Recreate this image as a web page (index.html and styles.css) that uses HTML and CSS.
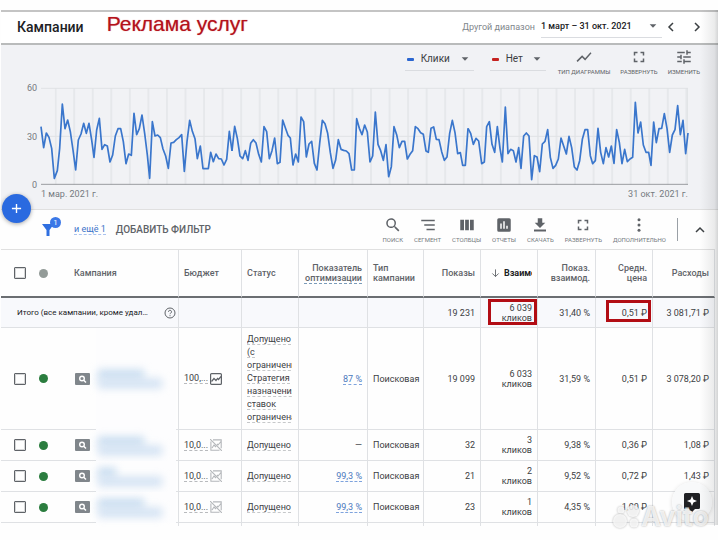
FILE: index.html
```html
<!DOCTYPE html>
<html lang="ru">
<head>
<meta charset="utf-8">
<title>Кампании</title>
<meta name="viewport" content="width=device-width, initial-scale=1">
<link rel="stylesheet" href="styles.css">
</head>
<body>
<svg class="defs" aria-hidden="true">
  <symbol id="caret" viewBox="0 0 24 24"><path d="M4 8h16l-8 8z"/></symbol>
  <symbol id="full" viewBox="0 0 24 24"><path d="M7 14H5v5h5v-2H7zM5 10h2V7h3V5H5zM17 17h-3v2h5v-5h-2zM14 5v2h3v3h2V5z"/></symbol>
  <symbol id="search-type" viewBox="0 0 15 12"><rect width="15" height="12" rx="1" fill="#80868b"/><circle cx="7" cy="5.500" r="2.300" fill="none" stroke="#fff" stroke-width="1.400"/><path d="M8.700 7.200l2.300 2.300" stroke="#fff" stroke-width="1.500"/></symbol>
  <symbol id="budget-on" viewBox="0 0 12 12"><rect x=".6" y=".6" width="10.800" height="10.800" rx="1" fill="none" stroke="#5f6368" stroke-width="1.200"/><path d="M1.500 8.500l2.500-3 2 2 1.500-2 1 1 2.500-3" fill="none" stroke="#5f6368" stroke-width="1.200"/></symbol>
  <symbol id="budget-off" viewBox="0 0 12 12"><path d="M3 .9h8.200v8.300M.9 2.500v8.700h8.600M0 0l12 12M2 9l2-3 2 2M7 5l1 1 3-3.500" fill="none" stroke="#b4b7ba" stroke-width="1.100"/></symbol>
</svg>
<div class="page">
  <header class="topbar">
    <h1>Кампании</h1>
    <strong class="note">Реклама услуг</strong>
    <div class="range">
      <label for="range">Другой диапазон</label>
      <span class="pick pick-date">
        <select id="range"><option>1 март – 31 окт. 2021</option></select>
        <svg><use href="#caret"/></svg>
      </span>
      <div class="steps">
        <button class="step" aria-label="Назад"><svg viewBox="0 0 12 12"><path d="M8 2L4 6l4 4"/></svg></button>
        <button class="step" aria-label="Вперёд"><svg viewBox="0 0 12 12"><path d="M4 2l4 4-4 4"/></svg></button>
      </div>
    </div>
  </header>

  <section class="chart">
    <div class="chart-bar">
      <span class="pick pick-clicks"><i class="key blue"></i>
        <select aria-label="Первый показатель"><option>Клики</option></select>
        <svg><use href="#caret"/></svg></span>
      <span class="pick pick-none"><i class="key red"></i>
        <select aria-label="Второй показатель"><option>Нет</option></select>
        <svg><use href="#caret"/></svg></span>
      <div class="tools">
        <button class="tool"><svg viewBox="0 0 24 24"><path d="M3.500 18.500l6-6 4 4L22 6.900 20.600 5.500l-7.100 8-4-4L2 17z"/></svg>Тип диаграммы</button>
        <button class="tool"><svg><use href="#full"/></svg>Развернуть</button>
        <button class="tool"><svg viewBox="0 0 24 24"><path d="M3 17v2h6v-2zM3 5v2h10V5zM13 21v-2h8v-2h-8v-2h-2v6zM7 9v2H3v2h4v2h2V9zM21 13v-2H11v2zM15 9h2V7h4V5h-4V3h-2z"/></svg>Изменить</button>
      </div>
    </div>
    <div class="plot">
      <div class="y-axis"><span>60</span><span>30</span><span>0</span></div>
      <svg class="lines" viewBox="123 24 1941 291" preserveAspectRatio="none" role="img" aria-label="Клики по дням">
        <defs><pattern id="weeks" x="164" y="0" width="55.650" height="400" patternUnits="userSpaceOnUse"><rect width="6" height="400" fill="#e6e8eb"/></pattern></defs>
        <rect x="164" y="24" width="1900" height="291" fill="url(#weeks)"/>
        <path class="grid" d="M123 25H2064M123 169H2064M2062 24V315"/>
        <path class="base" d="M123 313H2064"/>
        <g class="series">
          <polyline points="123,140 131,203 139,159 147,172 155,205 163,295 172,272 179,205 187,72 195,146 203,120 211,155 219,210 227,270 235,180 243,162 251,130 259,160 267,130 275,180 282,232 290,150 298,115 306,208 314,194 322,198 330,246 338,225 346,168 354,146 362,146 370,185 378,251 386,222 394,226 402,100 410,164 418,146 426,105 434,160 442,225 449,295 457,125 465,168 473,165 481,173 489,207 497,228 505,265 513,189 521,187 529,179 537,173 545,164 553,274 561,185 569,121 577,154 585,176 592,236 601,198 609,266 617,266 625,266 632,217 640,245 648,222 656,236 664,237 672,255 680,238 688,154 696,213"/>
          <polyline transform="translate(690 0)" points="6,213 14,139 22,175 30,228 38,236 46,212 54,241 62,190 70,179 78,189 86,223 94,246 102,140 110,155 118,236 126,212 134,174 142,251 150,247 158,120 166,143 174,166 181,174 189,255 197,222 205,246 213,111 221,125 229,231 237,192 245,184 253,250 261,270 269,190 277,121 285,131 293,160 301,218 309,265 317,240 325,179 333,208 341,211 349,213 357,221 365,270 373,270 380,116 388,145 396,164 404,135 412,156 420,246 428,228 436,96 444,193 452,212 460,241 468,194 476,290 484,260 492,140 500,164 508,203 516,184 524,184 532,237 540,223 548,212 556,140 564,146 572,158 580,163 588,213 595,217 603,145 611,141 619,178 627,179 635,215 643,241 651,231 659,160 667,121 675,158 683,221 691,218 698,256 706,256 714,145"/>
          <polyline transform="translate(1380 0)" points="24,145 32,160 40,193 48,175 56,183 65,251 73,246 80,140 88,125 96,193 104,217 112,140 120,205 127,246 136,81 144,221 152,208 160,212 168,246 176,203 183,265 191,168 199,159 207,168 215,299 223,227 231,231 239,275 247,192 255,184 263,149 271,232 279,265 287,256 295,237 303,174 311,198 319,222 327,169 335,203 343,261 351,270 359,242 367,178 375,149 383,149 391,227 398,251 406,242 414,145 422,217 430,251 438,203 446,231 454,198 462,250 470,149 478,187 486,251 494,208 502,245 510,237 518,232 526,67 534,159 542,126 550,195 558,217 566,217 573,256 581,126 589,188 597,146 605,145 613,101 621,145 629,217 637,165 645,149 653,77 661,164 669,121 677,221 684,159"/>
        </g>
      </svg>
      <div class="x-axis"><span>1 мар. 2021 г.</span><span>31 окт. 2021 г.</span></div>
    </div>
  </section>

  <section class="filters">
    <button class="add" aria-label="Создать"><svg viewBox="0 0 12 12"><path d="M6 1v10M1 6h10"/></svg></button>
    <button class="funnel" aria-label="Фильтр"><svg viewBox="0 0 12 12"><path d="M0 0h12L7.500 6v6h-3V6z"/></svg><span class="badge">1</span></button>
    <a class="more" href="#">и ещё 1</a>
    <button class="add-filter">Добавить фильтр</button>
    <div class="tools">
      <button class="tool"><svg viewBox="0 0 24 24"><path d="M15.500 14h-.8l-.3-.3A6.500 6.500 0 1 0 13.700 14.400l.3.300v.8l5 5 1.500-1.500zm-6 0a4.500 4.500 0 1 1 0-9 4.500 4.500 0 0 1 0 9z"/></svg>Поиск</button>
      <button class="tool"><svg viewBox="0 0 24 24"><path d="M3 5h18v2H3zM7 11h14v2H7zM10 17h11v2H10z"/></svg>Сегмент</button>
      <button class="tool"><svg viewBox="0 0 24 24"><path d="M3 5h5v14H3zM9.500 5h5v14h-5zM16 5h5v14h-5z"/></svg>Столбцы</button>
      <button class="tool"><svg viewBox="0 0 24 24"><path fill-rule="evenodd" d="M5 3h14a2 2 0 0 1 2 2v14a2 2 0 0 1-2 2H5a2 2 0 0 1-2-2V5a2 2 0 0 1 2-2zm2 7v7h2v-7zm4-3v10h2V7zm4 6v4h2v-4z"/></svg>Отчеты</button>
      <button class="tool"><svg viewBox="0 0 24 24"><path d="M19 9h-4V3H9v6H5l7 7zM4 18v2.500h16V18z"/></svg>Скачать</button>
      <button class="tool"><svg><use href="#full"/></svg>Развернуть</button>
      <button class="tool"><svg viewBox="0 0 24 24"><circle cx="12" cy="5" r="2"/><circle cx="12" cy="12" r="2"/><circle cx="12" cy="19" r="2"/></svg>Дополнительно</button>
    </div>
    <button class="collapse" aria-label="Свернуть"><svg viewBox="0 0 12 12"><path d="M2 8l4-4 4 4"/></svg></button>
  </section>

  <table>
    <colgroup><col class="c-check"><col class="c-dot"><col class="c-name"><col class="c-budget"><col class="c-status"><col class="c-score"><col class="c-type"><col class="c-num"><col class="c-num"><col class="c-rate"><col class="c-num"><col class="c-cost"></colgroup>
    <thead>
      <tr>
        <th class="bare"><input type="checkbox" aria-label="Выбрать все"></th>
        <th class="bare dot-cell"><i class="dot grey"></i></th>
        <th class="name">Кампания</th>
        <th>Бюджет</th>
        <th>Статус</th>
        <th class="num"><span class="hint">Показатель оптимизации</span></th>
        <th>Тип кампании</th>
        <th class="num">Показы</th>
        <th class="sorted"><div class="sort"><svg viewBox="0 0 10 10"><path d="M5 1v8M1.500 5.500L5 9l3.500-3.500"/></svg><span>Взаимо</span></div></th>
        <th class="num">Показ. взаимод.</th>
        <th class="num">Средн. цена</th>
        <th class="num">Расходы</th>
      </tr>
    </thead>
    <tbody>
      <tr class="total">
        <td colspan="3"><div class="sum"><span>Итого (все кампании, кроме удал…</span><svg viewBox="0 0 12 12"><circle cx="6" cy="6" r="5"/><path d="M4.500 4.800a1.500 1.500 0 1 1 2.200 1.300q-.7.400-.7 1.100M6 8.200v1"/></svg></div></td>
        <td></td><td></td><td></td><td></td>
        <td class="num">19 231</td>
        <td class="num marked">6 039 кликов<i class="frame frame-clicks"></i></td>
        <td class="num">31,40 %</td>
        <td class="num marked">0,51 ₽<i class="frame frame-price"></i></td>
        <td class="num">3 081,71 ₽</td>
      </tr>
      <tr class="tall">
        <td class="bare"><input type="checkbox" aria-label="Выбрать кампанию"></td>
        <td class="bare dot-cell"><i class="dot"></i></td>
        <td class="name"><svg class="kind"><use href="#search-type"/></svg><div class="veil"><i></i><i></i></div></td>
        <td><div class="budget"><span>100,...</span><svg><use href="#budget-on"/></svg></div></td>
        <td class="status"><div class="lines-text"><span>Допущено<br>(с<br>ограничени<br>Стратегия<br>назначения<br>ставок<br>ограничена</span></div></td>
        <td class="num"><a href="#">87 %</a></td>
        <td>Поисковая</td>
        <td class="num">19 099</td><td class="num">6 033 кликов</td><td class="num">31,59 %</td><td class="num">0,51 ₽</td><td class="num">3 078,20 ₽</td>
      </tr>
      <tr>
        <td class="bare"><input type="checkbox" aria-label="Выбрать кампанию"></td>
        <td class="bare dot-cell"><i class="dot"></i></td>
        <td class="name"><svg class="kind"><use href="#search-type"/></svg><div class="veil"><i></i><i></i></div></td>
        <td><div class="budget"><span>10,0...</span><svg><use href="#budget-off"/></svg></div></td>
        <td class="status"><div class="lines-text"><span>Допущено</span></div></td>
        <td class="num">—</td>
        <td>Поисковая</td>
        <td class="num">32</td><td class="num">3<br>кликов</td><td class="num">9,38 %</td><td class="num">0,36 ₽</td><td class="num">1,08 ₽</td>
      </tr>
      <tr>
        <td class="bare"><input type="checkbox" aria-label="Выбрать кампанию"></td>
        <td class="bare dot-cell"><i class="dot"></i></td>
        <td class="name"><svg class="kind"><use href="#search-type"/></svg><div class="veil short"><i></i><i></i></div></td>
        <td><div class="budget"><span>10,0...</span><svg><use href="#budget-off"/></svg></div></td>
        <td class="status"><div class="lines-text"><span>Допущено</span></div></td>
        <td class="num"><a href="#">99,3 %</a></td>
        <td>Поисковая</td>
        <td class="num">21</td><td class="num">2<br>кликов</td><td class="num">9,52 %</td><td class="num">0,72 ₽</td><td class="num">1,43 ₽</td>
      </tr>
      <tr>
        <td class="bare"><input type="checkbox" aria-label="Выбрать кампанию"></td>
        <td class="bare dot-cell"><i class="dot"></i></td>
        <td class="name"><svg class="kind"><use href="#search-type"/></svg><div class="veil"><i></i><i></i></div></td>
        <td><div class="budget"><span>10,0...</span><svg><use href="#budget-off"/></svg></div></td>
        <td class="status"><div class="lines-text"><span>Допущено</span></div></td>
        <td class="num"><a href="#">99,3 %</a></td>
        <td>Поисковая</td>
        <td class="num">23</td><td class="num">1<br>кликов</td><td class="num">4,35 %</td><td class="num">1,00 ₽</td><td class="num"></td>
      </tr>
      <tr class="tail"><td colspan="3"></td><td></td><td></td><td></td><td></td><td></td><td></td><td></td><td></td><td></td></tr>
    </tbody>
  </table>

  <button class="assist" aria-label="Помощник"><svg viewBox="0 0 16 19"><path d="M1.500 0h13A1.500 1.500 0 0 1 16 1.500v13a1.500 1.500 0 0 1-1.500 1.500H11l-3 3-3-3H1.500A1.500 1.500 0 0 1 0 14.500v-13A1.500 1.500 0 0 1 1.500 0z" fill="#202124"/><path d="M8 3l1.400 3.600L13 8 9.400 9.400 8 13 6.600 9.400 3 8l3.600-1.400z" fill="#fff"/></svg></button>
  <div class="watermark">
    <svg viewBox="0 0 30 26"><circle cx="9" cy="17" r="7"/><circle cx="23" cy="19" r="4.500"/><circle cx="10" cy="6" r="3.500"/><circle cx="22" cy="7" r="6"/></svg>
    <span>Avito</span>
  </div>
</div>
</body>
</html>
```
FILE: styles.css
```css
* { box-sizing: border-box; }
body {
  margin: 0;
  background: #fefefe;
  color: #3c4043;
  font: 9px/10px Roboto, "Liberation Sans", sans-serif;
}
.defs { position: absolute; width: 0; height: 0; }
button, select {
  margin: 0;
  padding: 0;
  border: 0;
  background: none;
  color: inherit;
  font: inherit;
  appearance: none;
}
svg { display: block; fill: #5f6368; }
.page {
  position: relative;
  min-height: 100vh;
  padding: 10px 3px 0 1px;
}
.page::after {
  content: "";
  position: absolute;
  top: 10px;
  right: 0;
  width: 18px;
  height: 515px;
  background: linear-gradient(to right, rgba(60, 64, 67, 0), rgba(60, 64, 67, 0.1) 80%, rgba(60, 64, 67, 0.22));
  pointer-events: none;
}

/* Top bar */
.topbar {
  display: flex;
  align-items: center;
  height: 35px;
  margin-right: -3px;
  padding: 0 13px 2px 16px;
  border-top: 2px solid #c4c4c4;
  border-bottom: 2px solid #b9bbbb;
  background: #fff;
}
h1 { margin: 0; color: #202124; font-size: 14px; font-weight: 500; line-height: 20px; }
.note {
  margin: 0 auto 6px 23px;
  color: #b5121b;
  font: 21px/24px "Liberation Sans", Arial, sans-serif;
  text-shadow: 0 0 1px rgba(181, 18, 27, 0.6);
}
.range { display: flex; align-items: center; color: #80868b; }
.range label { margin-right: 6px; font-size: 9px; }
.pick {
  display: flex;
  align-items: center;
  height: 23px;
  border-bottom: 1px solid #dadce0;
}
.pick select { flex: 1; min-width: 0; }
.pick svg { width: 10px; height: 10px; }
.pick-date { width: 121px; color: #202124; font-weight: 500; padding-right: 4px; }
.steps { display: flex; gap: 9px; }
.step { width: 17px; height: 18px; }
.step svg { width: 12px; height: 12px; margin: auto; }
.step svg path, .collapse path { fill: none; stroke: #3c4043; stroke-width: 1.500; }

/* Chart */
.chart {
  height: 165px;
  margin-right: -3px;
  border-bottom: 1px solid #e0e0e0;
  background: #f1f2f5;
}
.chart-bar {
  display: flex;
  align-items: flex-start;
  justify-content: flex-end;
  height: 43px;
  padding: 3px 18px 0 0;
  font-size: 10px;
}
.key { width: 7px; height: 3px; margin: 0 7px 0 2px; border-radius: 1px; }
.key.blue { background: #2b66d0; }
.key.red { background: #c5221f; }
.pick-clicks { width: 69px; margin-right: 16px; padding-right: 4px; }
.pick-none { width: 56px; margin-right: 12px; padding-right: 4px; }
.tools { display: flex; gap: 10px; }
.tool {
  display: flex;
  flex-direction: column;
  align-items: center;
  gap: 2px;
  color: #5f6368;
  font-size: 6px;
  line-height: 8px;
  text-transform: uppercase;
  white-space: nowrap;
}
.tool svg { width: 18px; height: 18px; }
.plot {
  display: grid;
  grid-template-columns: 36px 1fr;
  column-gap: 4px;
  padding-right: 30px;
  color: #757a7f;
}
.y-axis {
  display: flex;
  flex-direction: column;
  justify-content: space-between;
  margin: -5px 0;
  text-align: right;
}
.lines { width: 100%; height: 97px; overflow: visible; fill: none; }
.lines path, .lines polyline { fill: none; vector-effect: non-scaling-stroke; }
.grid { stroke: #e0e2e5; }
.base { stroke: #9a9da0; }
.series { stroke: #3a76cc; stroke-width: 1.700; stroke-linejoin: round; }
.x-axis { grid-column: 2; display: flex; justify-content: space-between; padding-top: 4px; }

/* Filter bar */
.filters {
  position: relative;
  display: flex;
  align-items: center;
  height: 40px;
  padding: 0 9px 0 41px;
  border-bottom: 1px solid #e0e0e0;
}
.filters .tools { gap: 11px; }
.add {
  position: absolute;
  left: 1px;
  top: -16px;
  width: 29px;
  height: 29px;
  border-radius: 50%;
  background: #2a6ae0;
  box-shadow: 0 1px 4px rgba(0, 0, 0, 0.35);
}
.add svg { width: 11px; height: 11px; margin: auto; }
.add path { stroke: #fff; stroke-width: 1.500; }
.funnel { position: relative; width: 12px; height: 12px; }
.funnel svg { width: 12px; height: 12px; fill: #2f6fe0; }
.badge {
  position: absolute;
  left: 8px;
  top: -7px;
  width: 11px;
  height: 11px;
  border-radius: 50%;
  background: #3b78e7;
  color: #fff;
  font-size: 8px;
  line-height: 11px;
}
.more {
  margin: 0 10px 0 20px;
  border-bottom: 1px dashed #a9c2ef;
  color: #3c72c8;
  text-decoration: none;
}
.add-filter { margin-right: auto; font-size: 10px; font-weight: 500; text-transform: uppercase; color: #5f6368; }
.filters .tool { color: #757a7f; }
.collapse { height: 23px; margin-left: 11px; padding-left: 16px; border-left: 1px solid #9aa0a6; }
.collapse svg { width: 12px; height: 12px; }

/* Campaign table */
table { width: 100%; border-collapse: separate; border-spacing: 0; table-layout: fixed; }
.c-check { width: 33px; }
.c-dot { width: 22px; }
.c-name { width: 123px; }
.c-budget { width: 63px; }
.c-status { width: 57px; }
.c-score { width: 69px; }
.c-type { width: 56px; }
.c-num { width: 57px; }
.c-rate { width: 58px; }
.c-cost { width: 62px; }
th, td {
  height: 31px;
  padding: 0 5px;
  border-right: 1px solid #dfe1e4;
  border-bottom: 1px solid #dfe1e4;
  text-align: left;
  vertical-align: middle;
}
th { height: 48px; border-bottom: 2px solid #6b6e72; color: #5f6368; font-weight: 500; }
.bare { padding: 0; border-right: 0; }
.dot-cell { padding-left: 5px; }
.name { position: relative; padding-left: 18px; }
.num { text-align: right; }
input[type="checkbox"] {
  display: block;
  width: 12px;
  height: 12px;
  margin: 0 0 0 13px;
  border: 1px solid #5f6368;
  outline: 1px solid rgba(95, 99, 104, 0.25);
  outline-offset: -2px;
  border-radius: 1px;
  appearance: none;
}
.dot { display: block; width: 9px; height: 9px; border-radius: 50%; background: #2b7d3f; }
.dot.grey { background: #939b98; }
.hint { display: inline-block; border-bottom: 1px dashed #7a9bb8; }
.sort { display: flex; align-items: center; gap: 4px; overflow: hidden; color: #202124; font-weight: 700; }
.sort svg { flex: none; width: 9px; height: 10px; margin-left: 5px; }
.sort path { fill: none; stroke: #5f6368; }
.sort span { overflow: hidden; }
.total td { background: #f8f9fc; height: 30px; }
.sum { display: flex; align-items: center; justify-content: space-between; padding-left: 11px; margin-right: -3px; color: #202124; font-size: 8px; white-space: nowrap; }
.sum svg { flex: none; width: 12px; height: 12px; fill: none; stroke: #5f6368; }
.marked { position: relative; }
.frame { position: absolute; border: 3px solid #b20d14; }
.frame-clicks { inset: 1px 0 2px 7px; }
.frame-price { inset: 2px 1px 5px 10px; }
.tall td { height: 102px; }
.kind { width: 15px; height: 12px; margin-left: 1px; }
.veil {
  position: absolute;
  inset: 0 2px -1px 40px;
  display: flex;
  flex-direction: column;
  justify-content: center;
  background: #fdfdfe;
}
.veil i { width: 46px; height: 9px; margin-left: 2px; background: #c4daef; filter: blur(4px); }
.veil i + i { width: 64px; background: #cfe0f2; }
.veil.short i:first-child { width: 18px; }
.budget { display: flex; align-items: center; gap: 2px; }
.budget span { border-bottom: 1px dashed #b8babd; }
.budget svg { flex: none; width: 12px; height: 12px; }
.lines-text { width: 45px; overflow: hidden; line-height: 13px; white-space: nowrap; }
.lines-text span { border-bottom: 1px dashed #c6c8ca; }
td a { border-bottom: 1px dashed #7ea3dd; color: #4a78bd; text-decoration: none; }
.tail td { height: 3px; border-bottom: 0; }

/* Floating items */
.assist {
  position: absolute;
  right: 6px;
  top: 482px;
  width: 40px;
  height: 40px;
  border-radius: 50%;
  background: rgba(248, 249, 250, 0.95);
  box-shadow: 0 1px 4px rgba(0, 0, 0, 0.15);
}
.assist svg { width: 16px; height: 19px; margin: auto; }
.watermark {
  position: absolute;
  right: 9px;
  top: 504px;
  display: flex;
  align-items: center;
  color: rgba(255, 255, 255, 0.8);
  font: 700 27px/26px Inter, Roboto, sans-serif;
  text-shadow: 0 0 2px rgba(0, 0, 0, 0.35);
  pointer-events: none;
}
.watermark svg {
  width: 30px;
  height: 26px;
  fill: rgba(255, 255, 255, 0.8);
  filter: drop-shadow(0 0 1px rgba(0, 0, 0, 0.35));
}
```
